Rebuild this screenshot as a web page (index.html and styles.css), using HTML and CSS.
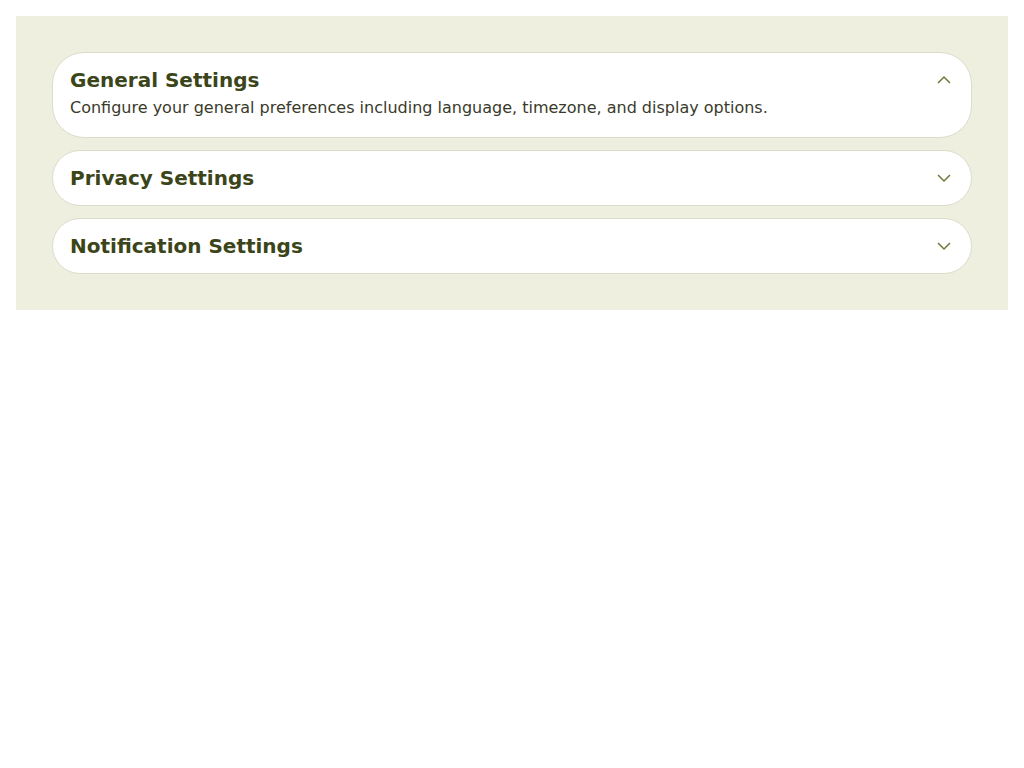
FILE: index.html
```html
<!DOCTYPE html>
<html lang="en">
<head>
    <meta charset="UTF-8">
    <meta name="viewport" content="width=device-width, initial-scale=1.0">
    <title>Settings</title>
    <link rel="stylesheet" href="styles.css">
</head>
<body>

    <div class="panel">
        <div class="accordion">

            <div class="item open">
                <div class="item-head">
                    <h2>General Settings</h2>
                    <svg class="chevron" viewBox="0 0 24 24"><path d="M6 15l6-6 6 6"/></svg>
                </div>
                <p class="item-body">Configure your general preferences including language, timezone, and display options.</p>
            </div>

            <div class="item">
                <div class="item-head">
                    <h2>Privacy Settings</h2>
                    <svg class="chevron" viewBox="0 0 24 24"><path d="M6 9l6 6 6-6"/></svg>
                </div>
            </div>

            <div class="item">
                <div class="item-head">
                    <h2>Notification Settings</h2>
                    <svg class="chevron" viewBox="0 0 24 24"><path d="M6 9l6 6 6-6"/></svg>
                </div>
            </div>

        </div>
    </div>

</body>
</html>
```

FILE: styles.css
```css
body {
    margin: 0;
    padding: 16px;
    font-family: "DejaVu Sans", sans-serif;
    color: #333;
    background: #fff;
}

.panel {
    background: #efefe0;
    padding: 36px;
}

.accordion {
    display: flex;
    flex-direction: column;
    gap: 12px;
}

.item {
    background: #fff;
    border: 1px solid #dcdccb;
    border-radius: 32px;
    padding: 13px 15px 13px 17px;
}

.item-head {
    display: flex;
    align-items: center;
    justify-content: space-between;
    height: 28px;
}

h2 {
    margin: 0;
    font-size: 20px;
    font-weight: bold;
    color: #3b4519;
}

.chevron {
    width: 24px;
    height: 24px;
    fill: none;
    stroke: #6b7a3a;
    stroke-width: 1.5;
}

.item-body {
    margin: 2px 0 4px;
    font-size: 16px;
    line-height: 24px;
    color: #3a3a2a;
}
```
